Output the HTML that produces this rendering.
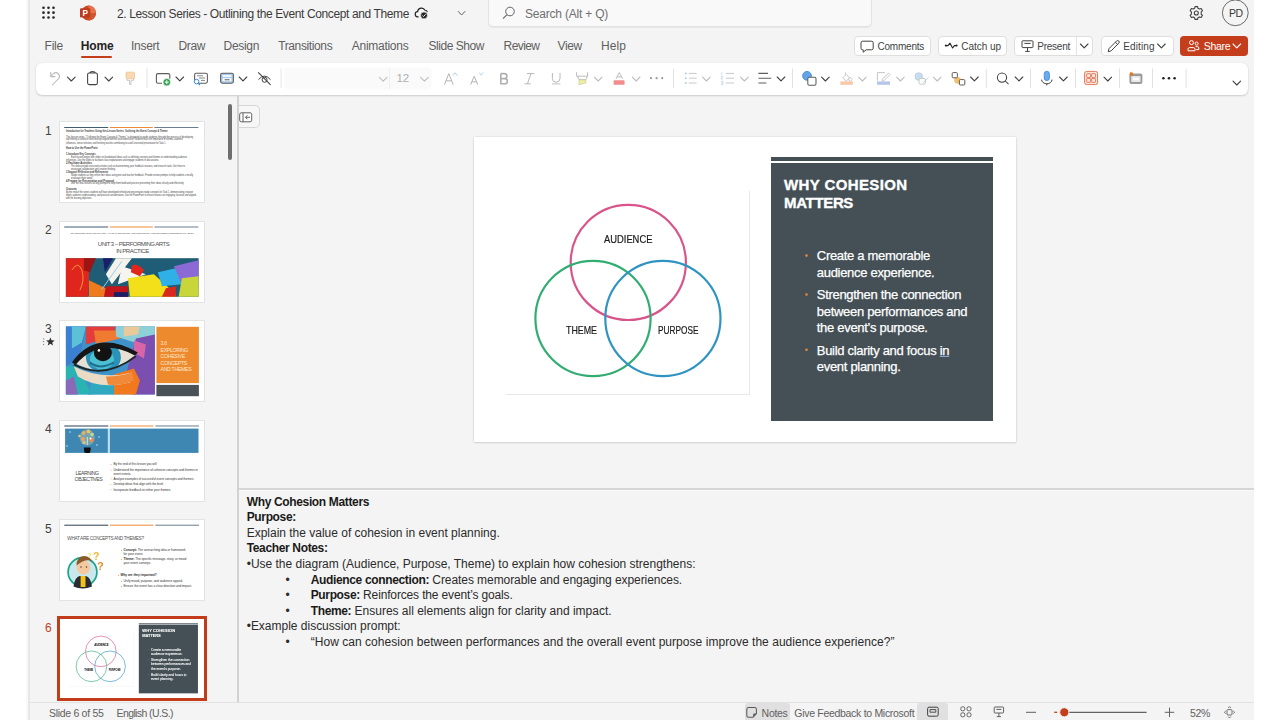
<!DOCTYPE html>
<html><head><meta charset="utf-8">
<style>
*{box-sizing:border-box}
html,body{margin:0;padding:0}
body{width:1280px;height:720px;position:relative;overflow:hidden;background:#fff;font-family:"Liberation Sans",sans-serif;color:#242424}
.a{position:absolute}
.vl{-webkit-text-stroke:0.2px #1a1a1a}
.t{position:absolute;white-space:nowrap;line-height:1}
svg{position:absolute;overflow:visible}
#app{left:26px;top:0;width:1228px;height:720px;background:#f4f4f4;border-left:2px solid #f9f9f9}
#app:before{content:"";position:absolute;left:0;top:0;width:2px;height:720px;background:#e7e7e7}
.tab{position:absolute;top:40px;font-size:12px;color:#5f5f5f;white-space:nowrap;line-height:12px}
.btn{position:absolute;top:36px;height:20px;background:#fff;border:1px solid #dedede;border-radius:4px}
.bt{position:absolute;top:42px;font-size:10px;line-height:10px;color:#424242;white-space:nowrap}
.sep{position:absolute;width:1px;background:#e0e0e0}
.num{position:absolute;left:44.9px;font-size:12px;line-height:12px;color:#424242}
.thumb{position:absolute;left:59.4px;width:145.3px;height:82px;background:#fff;border:1px solid #e3e3e3;overflow:hidden}
.th6 circle{stroke-width:3px;opacity:0.8}
.th6 .vl{font-weight:bold!important;font-size:12px!important;letter-spacing:-0.3px!important;margin-top:1px}
</style></head>
<body>
<div id="app" class="a"></div>

<!-- ===== TITLE BAR ===== -->
<svg style="left:0;top:0" width="1280" height="30">
  <g fill="#242424">
    <circle cx="43.5" cy="7.8" r="1.3"/><circle cx="48.5" cy="7.8" r="1.3"/><circle cx="53.5" cy="7.8" r="1.3"/>
    <circle cx="43.5" cy="12.65" r="1.3"/><circle cx="48.5" cy="12.65" r="1.3"/><circle cx="53.5" cy="12.65" r="1.3"/>
    <circle cx="43.5" cy="17.5" r="1.3"/><circle cx="48.5" cy="17.5" r="1.3"/><circle cx="53.5" cy="17.5" r="1.3"/>
  </g>
  <!-- ppt logo -->
  <circle cx="88.6" cy="13" r="7.4" fill="#c9482a"/>
  <path d="M88.6 5.6 A7.4 7.4 0 0 1 96 13 L88.6 13Z" fill="#e8704a"/>
  <path d="M88.6 13 L96 13 A7.4 7.4 0 0 1 88.6 20.4Z" fill="#d05430"/>
  <rect x="80" y="8.3" width="10.4" height="9.2" rx="1.2" fill="#bd3c1c"/>
  <text x="82.4" y="16.1" font-family="Liberation Sans" font-weight="bold" font-size="8.2" fill="#fff">P</text>
  <!-- cloud check -->
  <path d="M418.6 16.8 h-0.6 a2.6 2.6 0 0 1 -0.4-5.2 a3.9 3.9 0 0 1 7.4-1.3 a2.6 2.6 0 0 1 2.4 1.8" fill="none" stroke="#242424" stroke-width="1.15"/>
  <circle cx="424" cy="15.4" r="3.4" fill="#242424" stroke="#f3f3f3" stroke-width="0.6"/>
  <path d="M422.3 15.4 l1.2 1.2 l2.2-2.4" fill="none" stroke="#fff" stroke-width="0.9"/>
  <!-- chevron -->
  <path d="M458 11.2 l3.6 3.8 l3.6-3.8" fill="none" stroke="#616161" stroke-width="1"/>
</svg>
<div class="t" style="left:117px;top:8px;font-size:12px;line-height:12px;color:#3b3b3b;letter-spacing:-0.38px">2. Lesson Series - Outlining the Event Concept and Theme</div>

<!-- search -->
<div class="a" style="left:487.8px;top:-5px;width:384px;height:31.6px;background:#f9f9f9;border:1px solid #e3e3e3;border-radius:5px;box-shadow:0 1px 1px rgba(0,0,0,0.06)"></div>
<svg style="left:0;top:0" width="1" height="1">
  <circle cx="510" cy="11.5" r="4.3" fill="none" stroke="#616161" stroke-width="1"/>
  <path d="M507 14.6 L503 18.6" stroke="#616161" stroke-width="1.1"/>
</svg>
<div class="t" style="left:525px;top:8px;font-size:12px;line-height:12px;color:#707070;letter-spacing:-0.2px">Search (Alt + Q)</div>

<!-- gear and avatar -->
<svg style="left:0;top:0" width="1" height="1">
  <g transform="translate(1196.3,13)" fill="none" stroke="#424242" stroke-width="1.1">
    <path d="M-1.3 -6.4 L1.3 -6.4 L1.7 -4.7 L3.2 -3.9 L4.9 -4.5 L6.2 -2.3 L4.9 -1.1 L4.9 1.1 L6.2 2.3 L4.9 4.5 L3.2 3.9 L1.7 4.7 L1.3 6.4 L-1.3 6.4 L-1.7 4.7 L-3.2 3.9 L-4.9 4.5 L-6.2 2.3 L-4.9 1.1 L-4.9 -1.1 L-6.2 -2.3 L-4.9 -4.5 L-3.2 -3.9 L-1.7 -4.7 Z" stroke-linejoin="round"/>
    <circle r="2"/>
  </g>
  <circle cx="1235.3" cy="12.8" r="12.9" fill="#f4f4f4" stroke="#6a6a6a" stroke-width="1"/>
</svg>
<div class="t" style="left:1229px;top:8.4px;font-size:10.5px;line-height:10.5px;color:#3a3a3a;letter-spacing:-0.4px">PD</div>

<!-- ===== TABS ===== -->
<div class="tab" style="left:44.5px;letter-spacing:-0.2px">File</div>
<div class="tab" style="left:80.8px;color:#242424;font-weight:bold;letter-spacing:-0.15px">Home</div>
<div class="a" style="left:81px;top:55.5px;width:31px;height:2px;background:#c43e1c;border-radius:1px"></div>
<div class="tab" style="left:131px;letter-spacing:-0.28px">Insert</div>
<div class="tab" style="left:178.5px;letter-spacing:-0.33px">Draw</div>
<div class="tab" style="left:223.6px;letter-spacing:-0.32px">Design</div>
<div class="tab" style="left:278.2px;letter-spacing:-0.38px">Transitions</div>
<div class="tab" style="left:351.8px;letter-spacing:-0.28px">Animations</div>
<div class="tab" style="left:428.6px;letter-spacing:-0.48px">Slide Show</div>
<div class="tab" style="left:503.6px;letter-spacing:-0.6px">Review</div>
<div class="tab" style="left:557.6px;letter-spacing:-0.4px">View</div>
<div class="tab" style="left:601px;letter-spacing:0.1px">Help</div>


<!-- ===== RIBBON CARD ===== -->
<div class="a" style="left:36px;top:63px;width:1212px;height:32px;background:#fff;border-radius:6px;box-shadow:0 1px 2px rgba(0,0,0,0.16),0 0 1px rgba(0,0,0,0.10)"></div>
<svg style="left:0;top:0" width="1" height="1">
 <defs>
  <path id="chev" d="M0 0 l3.8 3.8 l3.8-3.8" fill="none" stroke-width="1.1" stroke-linecap="round" stroke-linejoin="round"/>
 </defs>
 <!-- undo disabled -->
 <path d="M52.3 85 L58.6 78.6 A3.6 3.6 0 0 0 53.6 73.5 L51 76.2 M50.8 72.3 L50.8 76.6 L55 76.6" fill="none" stroke="#b9b9b9" stroke-width="1.05" stroke-linecap="round" stroke-linejoin="round"/>
 <use href="#chev" x="67.5" y="77.2" stroke="#424242"/>
 <!-- clipboard -->
 <rect x="87.6" y="73" width="9.8" height="11.6" rx="1.6" fill="none" stroke="#424242" stroke-width="1.05"/>
 <path d="M90 73 a2.4 1.3 0 0 1 5 0" fill="none" stroke="#424242" stroke-width="1.05"/>
 <use href="#chev" x="105" y="77.2" stroke="#424242"/>
 <!-- format painter -->
 <rect x="126" y="72.2" width="8.6" height="6.6" rx="1" fill="#f9d9b4" stroke="#f2c28e" stroke-width="0.8"/>
 <path d="M127 78.8 v1.5 h2.6 v4.2 h1.4 v-4.2 h2.6 v-1.5" fill="none" stroke="#c2c2c2" stroke-width="0.9"/>
 <!-- separator -->
 <rect x="146.5" y="68.2" width="1" height="19.7" fill="#e1e1e1"/>
 <!-- new slide -->
 <path d="M162 83.3 h-4 a1.6 1.6 0 0 1 -1.6-1.6 v-6.5 a1.6 1.6 0 0 1 1.6-1.6 h10.2 a1.6 1.6 0 0 1 1.6 1.6 v3.5" fill="none" stroke="#5c5c5c" stroke-width="1.1"/>
 <circle cx="166.8" cy="82.2" r="3.7" fill="#2e9e4a" stroke="#fff" stroke-width="0.6"/>
 <path d="M166.8 80.2 v4 M164.8 82.2 h4" stroke="#fff" stroke-width="1"/>
 <use href="#chev" x="176" y="77" stroke="#424242"/>
 <!-- reuse slides -->
 <rect x="194.6" y="73.2" width="12.8" height="10" rx="1.6" fill="none" stroke="#5c5c5c" stroke-width="1.05"/>
 <path d="M197 75.8 h6 M199 78 h6 M201 80.4 h4" stroke="#7a7a7a" stroke-width="0.9"/>
 <circle cx="196.6" cy="81.6" r="2.3" fill="#fff" stroke="#3d8fd8" stroke-width="1"/>
 <path d="M198.2 83.3 l1.8 1.8" stroke="#3d8fd8" stroke-width="1.1"/>
 <!-- layout -->
 <rect x="220.6" y="73.2" width="12.8" height="10" rx="1.6" fill="#a9cbea" stroke="#5c5c5c" stroke-width="1.05"/>
 <rect x="222.6" y="75.2" width="8.8" height="1.6" fill="#fff"/>
 <rect x="222.6" y="78.2" width="8.8" height="3" fill="#fff"/>
 <rect x="224.6" y="79" width="5" height="1.4" fill="#8a8a8a"/>
 <use href="#chev" x="239.2" y="77" stroke="#424242"/>
 <!-- hide slide -->
 <path d="M258.5 79.6 q5.8-7 12 0" fill="none" stroke="#424242" stroke-width="1"/>
 <circle cx="264.6" cy="79.8" r="2.5" fill="none" stroke="#424242" stroke-width="1"/>
 <path d="M258.2 72.4 l12.4 12.4" stroke="#424242" stroke-width="1.05"/>
 <rect x="280.6" y="68.2" width="1" height="19.7" fill="#e6e6e6"/>
 <!-- font boxes -->
 <rect x="284.5" y="67.6" width="147" height="22" rx="4" fill="#fafafa"/>
 <rect x="389" y="67.6" width="1" height="22" fill="#f0f0f0"/>
 <use href="#chev" x="379.4" y="77.3" stroke="#bdbdbd"/>
 <use href="#chev" x="420.6" y="77.3" stroke="#bdbdbd"/>
 <!-- grow/shrink -->
 <path d="M444.4 84.8 L448.8 73.6 L453.2 84.8 M446 80.8 h5.6" fill="none" stroke="#b5b5b5" stroke-width="1"/>
 <path d="M452.8 75.6 l2.3-2.8 l2.3 2.8" fill="none" stroke="#a9cfe6" stroke-width="0.9"/>
 <path d="M470.6 84.8 L474.2 76.2 L477.8 84.8 M471.9 81.8 h4.6" fill="none" stroke="#b5b5b5" stroke-width="1"/>
 <path d="M479.2 72.6 l2 2.6 l2-2.6" fill="none" stroke="#a9cfe6" stroke-width="0.9"/>
 <!-- B I U -->
 <path d="M500.8 73.6 h3.6 a2.5 2.5 0 0 1 0 5 h-3.6 M500.8 78.6 h4 a2.6 2.6 0 0 1 0 5.2 h-4 Z M500.8 73.6 v10.2" fill="none" stroke="#b0b0b0" stroke-width="1.6"/>
 <path d="M527 73.6 h7.4 M524.4 83.8 h6.4 M531 73.6 l-3.6 10.2" fill="none" stroke="#b8b8b8" stroke-width="1"/>
 <path d="M552.4 73.1 v5.4 a3.8 3.8 0 0 0 7.6 0 v-5.4" fill="none" stroke="#b8b8b8" stroke-width="1"/>
 <rect x="552" y="83.4" width="8.4" height="1" fill="#c0c0c0"/>
 <!-- highlighter -->
 <path d="M576.6 72.2 v4 h11 v-4" fill="none" stroke="#b5b5b5" stroke-width="0.9"/>
 <path d="M577.6 76.4 l1.4 3.2 h7 l1.4-3.2" fill="none" stroke="#b5b5b5" stroke-width="0.9"/>
 <path d="M579 79.8 v5 l6.8-2 v-3z" fill="#eef0a0" stroke="#c7c7a5" stroke-width="0.7"/>
 <use href="#chev" x="594.4" y="77.2" stroke="#bdbdbd"/>
 <!-- font color -->
 <path d="M616 78.8 L619.3 72.6 L622.6 78.8 M617.1 76.9 h4.4" fill="none" stroke="#b5b5b5" stroke-width="0.9"/>
 <rect x="613.6" y="80.3" width="11" height="4.5" rx="0.8" fill="#f28d8d"/>
 <use href="#chev" x="632.4" y="77.2" stroke="#bdbdbd"/>
 <!-- more -->
 <g fill="#9a9a9a"><circle cx="651" cy="78.2" r="1.1"/><circle cx="656.6" cy="78.2" r="1.1"/><circle cx="662.2" cy="78.2" r="1.1"/></g>
 <rect x="673" y="68.6" width="1" height="19.3" fill="#e1e1e1"/>
 <!-- bullets -->
 <g fill="#a7c8e2"><circle cx="685.8" cy="73.4" r="0.9"/><circle cx="685.8" cy="78.2" r="0.9"/><circle cx="685.8" cy="83" r="0.9"/></g>
 <path d="M688.8 73.4 h7.8 M688.8 78.2 h7.8 M688.8 83 h7.8" stroke="#c2c2c2" stroke-width="0.9"/>
 <use href="#chev" x="702.6" y="77.2" stroke="#bdbdbd"/>
 <path d="M721.8 72.4 v2.4 M721.2 76.6 h1.6 l-1.6 2.4 h1.6 M721.2 81.2 h1.6 v3.4 h-1.6 M721.4 83 h1.2" fill="none" stroke="#a7c8e2" stroke-width="0.7"/>
 <path d="M725.8 73.4 h8.2 M725.8 78.2 h8.2 M725.8 83 h8.2" stroke="#c2c2c2" stroke-width="0.9"/>
 <use href="#chev" x="740.6" y="77.2" stroke="#bdbdbd"/>
 <path d="M758.4 73.4 h9.6 M758.4 78.2 h12.8 M758.4 83 h8" stroke="#5f5f5f" stroke-width="1.1"/>
 <use href="#chev" x="777.2" y="77" stroke="#424242"/>
 <rect x="792" y="68.6" width="1" height="19.3" fill="#e1e1e1"/>
 <!-- shapes -->
 <circle cx="807" cy="75.8" r="4.4" fill="#63a4e6" stroke="#3b84d0" stroke-width="0.8"/>
 <rect x="807.8" y="77.2" width="8.2" height="8" rx="1.5" fill="#fff" stroke="#5c5c5c" stroke-width="1.05"/>
 <use href="#chev" x="821.6" y="77.2" stroke="#424242"/>
 <!-- fill -->
 <path d="M845.6 72.3 v2 M843 77.6 l3.2-3.2 l3.4 3.4 l-3.4 3.4z" fill="none" stroke="#c0c0c0" stroke-width="0.9"/>
 <circle cx="850.3" cy="79.4" r="1.7" fill="none" stroke="#c0c0c0" stroke-width="0.8"/>
 <rect x="840.4" y="81.4" width="12.5" height="3.4" fill="#f8c8a8"/>
 <use href="#chev" x="858.6" y="77.2" stroke="#bdbdbd"/>
 <!-- outline -->
 <path d="M885 72.6 h-7.6 v8.2" fill="none" stroke="#c0c0c0" stroke-width="0.9"/>
 <path d="M888.6 73.2 l1.4 1.4 l-6.2 6.2 h-1.6 v-1.6z" fill="none" stroke="#c0c0c0" stroke-width="0.9"/>
 <rect x="877" y="81.4" width="13" height="3.4" fill="#b5c6ea"/>
 <use href="#chev" x="896.6" y="77.2" stroke="#bdbdbd"/>
 <!-- effects -->
 <circle cx="918.8" cy="76.6" r="3.8" fill="#c9dcef" stroke="#b3cde6" stroke-width="0.8"/>
 <rect x="919" y="78.4" width="6.4" height="5.8" rx="1.5" fill="#fff" stroke="#c2c2c2" stroke-width="0.9"/>
 <path d="M923.6 82.6 l2.2-2.6 l2.6-2.6" stroke="#a9cfe6" stroke-width="0.9" fill="none"/>
 <use href="#chev" x="933.4" y="77.2" stroke="#bdbdbd"/>
 <!-- arrange -->
 <circle cx="957.6" cy="80.3" r="3.4" fill="#f2c26a"/>
 <rect x="952.2" y="72.6" width="5.2" height="5.2" rx="1" fill="#fff" stroke="#5c5c5c" stroke-width="1"/>
 <rect x="959.4" y="79.6" width="5.4" height="5.4" rx="1" fill="#fff" stroke="#5c5c5c" stroke-width="1"/>
 <use href="#chev" x="970.6" y="77" stroke="#424242"/>
 <rect x="985.8" y="68.6" width="1" height="19.3" fill="#e1e1e1"/>
 <!-- find -->
 <circle cx="1002" cy="77.6" r="4.6" fill="none" stroke="#424242" stroke-width="1.05"/>
 <path d="M1005.3 81 l3.2 3.2" stroke="#424242" stroke-width="1.05"/>
 <use href="#chev" x="1015.2" y="77" stroke="#424242"/>
 <rect x="1030" y="68.6" width="1" height="19.3" fill="#e1e1e1"/>
 <!-- dictate -->
 <rect x="1044.2" y="71.2" width="5.2" height="9.4" rx="2.6" fill="#6aaaf0" stroke="#3f86d4" stroke-width="0.8"/>
 <path d="M1041.6 79.6 a5.2 4.2 0 0 0 10.4 0 M1046.8 83.8 v1.6" fill="none" stroke="#424242" stroke-width="1"/>
 <use href="#chev" x="1059.6" y="77" stroke="#424242"/>
 <rect x="1075" y="68.6" width="1" height="19.3" fill="#e1e1e1"/>
 <!-- designer -->
 <rect x="1084.6" y="71.4" width="13" height="13.2" rx="2" fill="#fde3d8" stroke="#da6d4c" stroke-width="0.9"/>
 <g fill="none" stroke="#da6d4c" stroke-width="0.8">
  <rect x="1086.7" y="73.6" width="3.9" height="3.9" rx="0.6"/><rect x="1091.6" y="73.6" width="3.9" height="3.9" rx="0.6"/>
  <rect x="1086.7" y="78.5" width="3.9" height="3.9" rx="0.6"/><rect x="1091.6" y="78.5" width="3.9" height="3.9" rx="0.6"/>
 </g>
 <use href="#chev" x="1104" y="77.2" stroke="#424242"/>
 <rect x="1119" y="68.6" width="1" height="19.3" fill="#e1e1e1"/>
 <!-- add-ins -->
 <rect x="1129.4" y="73.4" width="13" height="10.6" rx="2" fill="#9b9b9b"/>
 <rect x="1131.2" y="76" width="9.4" height="6" rx="0.8" fill="#e6e6e6"/>
 <rect x="1133" y="77.6" width="6" height="2.6" fill="#fff"/>
 <path d="M1129.6 75.4 q-0.6-2.6 1.6-4 q0.2 1.4 1.6 1.2 q1 1.6 -0.4 3.2z" fill="#e8761a"/>
 <rect x="1152" y="68.6" width="1" height="19.3" fill="#e1e1e1"/>
 <g fill="#242424"><circle cx="1163.4" cy="78.2" r="1.3"/><circle cx="1169" cy="78.2" r="1.3"/><circle cx="1174.6" cy="78.2" r="1.3"/></g>
 <rect x="1185.6" y="68.6" width="1" height="19.3" fill="#e1e1e1"/>
 <use href="#chev" x="1233" y="81.2" stroke="#424242"/>
</svg>
<div class="t" style="left:396.6px;top:73.4px;font-size:11.5px;line-height:11.5px;color:#b0b0b0;letter-spacing:-0.3px">12</div>


<!-- ===== RIGHT BUTTONS ===== -->
<div class="btn" style="left:854px;width:77px"></div>
<div class="btn" style="left:938px;width:69px"></div>
<div class="btn" style="left:1014px;width:79px"></div>
<div class="a" style="left:1076px;top:37px;width:1px;height:18px;background:#e3e3e3"></div>
<div class="btn" style="left:1100.5px;width:73px"></div>
<div class="a" style="left:1180px;top:36px;width:68px;height:19.5px;background:#c43e1c;border-radius:4px"></div>
<div class="bt" style="left:877.4px;letter-spacing:-0.2px">Comments</div>
<div class="bt" style="left:961.3px;letter-spacing:-0.05px">Catch up</div>
<div class="bt" style="left:1037.3px;letter-spacing:-0.25px">Present</div>
<div class="bt" style="left:1123.2px;letter-spacing:0.12px">Editing</div>
<div class="bt" style="left:1203.8px;top:40.6px;font-size:10.6px;line-height:10.6px;color:#fff;letter-spacing:-0.35px">Share</div>
<svg style="left:0;top:0" width="1" height="1">
 <!-- comments icon -->
 <path d="M862.6 41.2 h9 a1.6 1.6 0 0 1 1.6 1.6 v5.4 a1.6 1.6 0 0 1 -1.6 1.6 h-5.4 l-3 2.4 v-2.4 h-0.6 a1.6 1.6 0 0 1 -1.6-1.6 v-5.4 a1.6 1.6 0 0 1 1.6-1.6z" fill="none" stroke="#424242" stroke-width="1"/>
 <!-- catch up -->
 <path d="M945.4 45.6 h2.6 l2-2.4 l2.6 4.8 l1.8-2.4 h2.4" fill="none" stroke="#242424" stroke-width="1.1" stroke-linejoin="round"/>
 <circle cx="945.8" cy="45.6" r="1" fill="#242424"/><circle cx="956.6" cy="45.6" r="1" fill="#242424"/>
 <!-- present -->
 <rect x="1022" y="40.8" width="11" height="6.8" rx="0.8" fill="none" stroke="#424242" stroke-width="1"/>
 <path d="M1024.4 43.4 h6.2 M1027.5 47.6 v3.6 M1025.2 51.4 h4.6" fill="none" stroke="#424242" stroke-width="1"/>
 <use href="#chev" x="1080.4" y="44" stroke="#424242"/>
 <!-- pencil -->
 <path d="M1108.2 51.8 l0.8-3.2 l7.6-7.6 a1.5 1.5 0 0 1 2.2 2.2 l-7.6 7.6z M1115.4 42.2 l2.2 2.2" fill="none" stroke="#424242" stroke-width="1"/>
 <use href="#chev" x="1157.6" y="44" stroke="#424242"/>
 <!-- share icon -->
 <circle cx="1191.5" cy="42.6" r="2" fill="none" stroke="#fff" stroke-width="1"/>
 <circle cx="1196.6" cy="43.6" r="1.5" fill="none" stroke="#fff" stroke-width="1"/>
 <path d="M1188 50.8 v-1.6 a1.6 1.6 0 0 1 1.6-1.6 h3.8 a1.6 1.6 0 0 1 1.6 1.6 v1.6 z M1195.6 46.6 h1.8 a1.4 1.4 0 0 1 1.4 1.4 v1.6 h-2.6" fill="none" stroke="#fff" stroke-width="1"/>
 <use href="#chev" x="1233" y="44" stroke="#fff"/>
</svg>

<!-- ===== PANES ===== -->
<div class="a" style="left:237.4px;top:96px;width:1.4px;height:606px;background:#d2d2d2"></div>
<div class="a" style="left:227.5px;top:104.3px;width:4.6px;height:56px;background:#6e6e6e;border-radius:2.3px"></div>
<div class="a" style="left:238.5px;top:104.9px;width:21.2px;height:23.6px;background:#f7f7f7;border:1px solid #d6d6d6;border-left:none;border-radius:0 5px 5px 0"></div>
<svg style="left:0;top:0" width="1" height="1">
 <rect x="239.7" y="112.8" width="12" height="9" rx="1.6" fill="#fff" stroke="#5a5a5a" stroke-width="0.95"/>
 <path d="M243 112.8 v9 M250 117.3 h-4.6 M247.4 115.4 l-1.9 1.9 l1.9 1.9" fill="none" stroke="#5a5a5a" stroke-width="0.95"/>
</svg>
<!-- notes divider -->
<div class="a" style="left:238.8px;top:488px;width:1015px;height:1.6px;background:#d6d6d6"></div>
<div class="a" style="left:238.8px;top:489.6px;width:1015px;height:1px;background:#f9f9f9"></div>
<!-- status bar -->
<div class="a" style="left:30px;top:702px;width:1224px;height:1px;background:#e1e1e1"></div>
<div class="a" style="left:745.2px;top:703px;width:44.5px;height:17px;background:#e0e0e0;border-radius:3px 3px 0 0"></div>
<div class="a" style="left:917px;top:703px;width:31.4px;height:17px;background:#e0e0e0;border-radius:3px 3px 0 0"></div>
<div class="t" style="left:49px;top:708px;font-size:10.5px;line-height:10.5px;color:#616161;letter-spacing:-0.3px">Slide 6 of 55</div>
<div class="t" style="left:116.5px;top:708px;font-size:10.5px;line-height:10.5px;color:#616161;letter-spacing:-0.6px">English (U.S.)</div>
<div class="t" style="left:761.6px;top:708px;font-size:10.5px;line-height:10.5px;color:#616161;letter-spacing:-0.3px">Notes</div>
<div class="t" style="left:794.3px;top:708px;font-size:10.5px;line-height:10.5px;color:#616161;letter-spacing:-0.3px">Give Feedback to Microsoft</div>
<div class="t" style="left:1190px;top:708px;font-size:10.5px;line-height:10.5px;color:#616161;letter-spacing:-0.3px">52%</div>
<svg style="left:0;top:0" width="1" height="1">
 <path d="M746.8 709.2 a1.8 1.8 0 0 1 1.8-1.8 h6 a1.8 1.8 0 0 1 1.8 1.8 v4.6 l-3.4 3.4 h-4.4 a1.8 1.8 0 0 1 -1.8-1.8z" fill="none" stroke="#5a5a5a" stroke-width="1.05"/><path d="M756.4 713.6 h-2.2 a1 1 0 0 0 -1 1 v2.4z" fill="#5a5a5a"/>
 <rect x="927.6" y="707.2" width="10.6" height="9" rx="1.4" fill="none" stroke="#424242" stroke-width="1"/>
 <path d="M930 709.6 h5.8 v2.6 h-5.8z" fill="none" stroke="#424242" stroke-width="0.9"/>
 <g fill="none" stroke="#616161" stroke-width="1">
  <rect x="960.8" y="706.8" width="4" height="4" rx="1.6"/><rect x="967" y="706.8" width="4" height="4" rx="1.6"/>
  <rect x="960.8" y="712.8" width="4" height="4" rx="1.6"/><rect x="967" y="712.8" width="4" height="4" rx="1.6"/>
 </g>
 <rect x="994.2" y="707" width="9.4" height="6" rx="0.8" fill="none" stroke="#616161" stroke-width="1"/>
 <path d="M996.4 709.4 h5 M998.9 713 v3.4 M996.8 716.6 h4.2" fill="none" stroke="#616161" stroke-width="1"/>
 <path d="M1026 712.3 h10" stroke="#616161" stroke-width="1"/>
 <path d="M1054.2 712.3 h3" stroke="#c43e1c" stroke-width="1.3"/>
 <path d="M1066 712.3 h80.6" stroke="#616161" stroke-width="1.3"/>
 <circle cx="1064.3" cy="712.3" r="4.6" fill="#c43e1c" stroke="#f4f4f4" stroke-width="1"/>
 <path d="M1164.8 712.3 h9.4 M1169.5 707.6 v9.4" stroke="#616161" stroke-width="1"/>
 <g fill="none" stroke="#616161" stroke-width="0.9">
  <rect x="1227" y="709.6" width="5" height="5.4" rx="1"/>
  <path d="M1228.2 708 l1.3-1.4 l1.3 1.4 M1228.2 716.6 l1.3 1.4 l1.3-1.4 M1225.8 711 l-1.4 1.3 l1.4 1.3 M1233.2 711 l1.4 1.3 l-1.4 1.3"/>
 </g>
</svg>


<!-- ===== MAIN SLIDE ===== -->
<div class="a" style="left:474px;top:136.6px;width:542.2px;height:305.2px;background:#fff;box-shadow:0 0 2px rgba(0,0,0,0.14),0 1px 2px rgba(0,0,0,0.10)"><div class="a" style="left:1px;top:0.9px;width:0;height:0">
<div class="a" style="left:295.7px;top:19.5px;width:222.3px;height:4.4px;background:#445056"></div>
<div class="a" style="left:295.7px;top:25.6px;width:222.3px;height:257.5px;background:#445056"></div>
<div class="a" style="left:30.8px;top:256.8px;width:243.5px;height:1px;background:#e8e8e8"></div>
<div class="a" style="left:273.6px;top:54px;width:1px;height:203.5px;background:#e8e8e8"></div>
<svg style="left:0;top:0" width="1" height="1">
 <circle cx="153.3" cy="125.4" r="57.6" fill="none" stroke="#d9548a" stroke-width="2.2"/>
 <circle cx="118" cy="181.5" r="57.6" fill="none" stroke="#32ad72" stroke-width="2.2"/>
 <circle cx="187.9" cy="181.5" r="57.6" fill="none" stroke="#2f94c2" stroke-width="2.2"/>
</svg>
<div class="t vl" style="left:129px;top:96.1px;font-size:10.5px;color:#1a1a1a;transform:scaleX(0.892);transform-origin:0 0">AUDIENCE</div>
<div class="t vl" style="left:91px;top:187.2px;font-size:10.5px;color:#1a1a1a;transform:scaleX(0.844);transform-origin:0 0">THEME</div>
<div class="t vl" style="left:182.6px;top:187.2px;font-size:10.5px;color:#1a1a1a;transform:scaleX(0.789);transform-origin:0 0">PURPOSE</div>
<div class="t" style="left:309.1px;top:38.3px;font-size:15px;line-height:18.4px;color:#fff;font-weight:bold;letter-spacing:0.37px;white-space:normal;width:200px;-webkit-text-stroke:0.35px #fff">WHY COHESION<br><span style="letter-spacing:-0.35px">MATTERS</span></div>
<svg style="left:0;top:0" width="1" height="1"><g fill="#e8873a">
 <circle cx="331.5" cy="118.6" r="1.3"/><circle cx="331.5" cy="157.5" r="1.3"/><circle cx="331.5" cy="212.7" r="1.3"/>
</g></svg>
<div class="t" style="left:341.8px;top:111px;font-size:13px;line-height:16.2px;color:#fff;letter-spacing:-0.3px;-webkit-text-stroke:0.25px #fff">Create a memorable<br>audience experience.</div>
<div class="t" style="left:341.8px;top:149.9px;font-size:13px;line-height:16.4px;color:#fff;letter-spacing:-0.3px;-webkit-text-stroke:0.25px #fff">Strengthen the connection<br>between performances and<br>the event’s purpose.</div>
<div class="t" style="left:341.8px;top:205.1px;font-size:13px;line-height:16.6px;color:#fff;letter-spacing:-0.3px;-webkit-text-stroke:0.25px #fff">Build clarity and focus <span style="text-decoration:underline;text-decoration-color:#8aa4d8">in</span><br>event planning.</div>

</div></div>

<!-- ===== THUMBNAILS ===== -->
<div class="num" style="top:124.6px">1</div>
<div class="num" style="top:224.1px">2</div>
<div class="num" style="top:323.4px">3</div>
<div class="num" style="top:423.1px">4</div>
<div class="num" style="top:522.9px">5</div>
<div class="num" style="top:622.2px;color:#c43e1c">6</div>
<svg style="left:0;top:0" width="1" height="1">
 <path d="M50.4 337.4 l1.15 2.9 l3.1 0.2 l-2.4 2 l0.8 3 l-2.65-1.7 l-2.65 1.7 l0.8-3 l-2.4-2 l3.1-0.2z" fill="#303030"/>
 <path d="M43 338.6 l1.2 0.6 M42.8 341.6 h1.4 M43 344.8 l1.2-0.6" stroke="#707070" stroke-width="0.9"/>
</svg>

<!-- thumb 1 -->
<div class="thumb" style="top:121px">
 <svg style="left:0;top:0" width="145" height="82">
  <rect x="4.2" y="5" width="44" height="1" fill="#3f5d74"/>
  <rect x="49.8" y="5" width="43" height="1" fill="#ee8c36"/>
  <rect x="94.4" y="5" width="44" height="1" fill="#6c7e8e"/>
  <g font-family="Liberation Sans" font-size="2.6" fill="#3a3a3a">
   <text x="6" y="10.2" textLength="101.5" lengthAdjust="spacingAndGlyphs" font-weight="bold">Introduction for Teachers Using this Lesson Series: Outlining the Event Concept &amp; Theme</text>
   <text x="6" y="15.8" textLength="127.0" lengthAdjust="spacingAndGlyphs">This lesson series, &quot;Outlining the Event Concept &amp; Theme,&quot; is designed to guide students through the process of developing</text>
   <text x="6" y="18.4" textLength="117.0" lengthAdjust="spacingAndGlyphs">and refining a cohesive event concept aligned with the assessment brief. Students learn the importance of themes, audience</text>
   <text x="6" y="21.6" textLength="100.0" lengthAdjust="spacingAndGlyphs">influences, venue selection, and finishing touches contributing to a well-structured presentation for Task 1.</text>
   <text x="6" y="27.2" textLength="31.6" lengthAdjust="spacingAndGlyphs" font-weight="bold">How to Use the PowerPoint</text>
   <text x="6" y="33.4" textLength="29.5" lengthAdjust="spacingAndGlyphs" font-weight="bold">1.Introduce Key Concepts</text>
   <text x="11" y="36.4" textLength="116.0" lengthAdjust="spacingAndGlyphs">Each lesson begins with slides on foundational ideas such as defining concepts and themes or understanding audience</text>
   <text x="6" y="39.4" textLength="93.0" lengthAdjust="spacingAndGlyphs">influences. Use the slides to facilitate class explanations and engage students in discussions.</text>
   <text x="6" y="42.1" textLength="26.0" lengthAdjust="spacingAndGlyphs" font-weight="bold">2.Facilitate Activities</text>
   <text x="11" y="44.9" textLength="114.0" lengthAdjust="spacingAndGlyphs">The slides provide structured activities such as brainstorming, peer feedback sessions, and research tasks. Use these to</text>
   <text x="11" y="48.1" textLength="44.5" lengthAdjust="spacingAndGlyphs">encourage collaboration and creative thinking.</text>
   <text x="6" y="50.8" textLength="42.0" lengthAdjust="spacingAndGlyphs" font-weight="bold">3.Support Reflection and Refinement</text>
   <text x="11" y="53.7" textLength="122.0" lengthAdjust="spacingAndGlyphs">Guide students as they refine their ideas using peer and teacher feedback. Provide review prompts to help students critically</text>
   <text x="11" y="56.8" textLength="22.0" lengthAdjust="spacingAndGlyphs">evaluate their work.</text>
   <text x="6" y="59.7" textLength="48.0" lengthAdjust="spacingAndGlyphs" font-weight="bold">4.Prepare for Presentation and Proposal</text>
   <text x="11" y="62.4" textLength="113.0" lengthAdjust="spacingAndGlyphs">Use the final lessons as key prompts to help them build and practice presenting their ideas clearly and effectively.</text>
   <text x="6" y="68.4" textLength="10.7" lengthAdjust="spacingAndGlyphs" font-weight="bold">Outcome</text>
   <text x="6" y="71.0" textLength="127.0" lengthAdjust="spacingAndGlyphs">By the end of the series students will have developed refined and presentation-ready concepts for Task 1, demonstrating creative</text>
   <text x="6" y="74.0" textLength="130.0" lengthAdjust="spacingAndGlyphs">depth, audience understanding, and practical considerations. Use the PowerPoint to ensure lessons are engaging, focused, and aligned</text>
   <text x="6" y="77.1" textLength="26.0" lengthAdjust="spacingAndGlyphs">with the learning objectives.</text>
  </g>
 </svg>
</div>

<!-- thumb 2 -->
<div class="thumb" style="top:220.5px">
 <svg style="left:0;top:0" width="145" height="82">
  <rect x="4.2" y="4.5" width="44" height="1" fill="#3f5d74"/>
  <rect x="49.8" y="4.5" width="43" height="1" fill="#ee8c36"/>
  <rect x="94.4" y="4.5" width="44" height="1" fill="#6c7e8e"/>
  <text x="10.5" y="11.8" textLength="123.5" lengthAdjust="spacingAndGlyphs" font-family="Liberation Sans" font-size="2.4" fill="#444">PEARSON BTEC LEVEL 1/LEVEL 2 TECH AWARD IN PERFORMING ARTS (PERFORMING ARTS COMPONENT 3 RESPONDING TO A BRIEF)</text>
  <g font-family="Liberation Sans" font-size="6" fill="#505050" style="letter-spacing:-0.5px">
   <text x="37.8" y="24.4">UNIT 3 – PERFORMING ARTS</text>
   <text x="56.2" y="30.6">IN PRACTICE</text>
  </g>
  <g transform="translate(5.9,36.2)" style="filter:blur(0.35px)">
   <rect width="132.7" height="38.6" fill="#1f5d76"/>
   <path d="M0 0 h24 l-2 38.6 h-22z" fill="#e0261c"/>
   <path d="M18 0 h12 l-6 14 l-6 -2z" fill="#9c1414"/>
   <path d="M37 0 h10 l-8 14z" fill="#1a1f6a"/>
   <path d="M23 22 l17 8 v8.6 h-17z" fill="#f07a1e"/>
   <path d="M50 0 h16 l-20 26 l-6 -10z" fill="#f4f2ea"/>
   <path d="M56 8 l24 8 l-28 10z" fill="#f6f4ee"/>
   <path d="M66 7 q6 -2 12 5 l-4 6 l-9 -4z" fill="#e2261c"/>
   <path d="M62 20 l26 -4 l22 20 v2.6 h-46z" fill="#f3df1a"/>
   <path d="M92 14 l18 -4 l6 16 l-20 2z" fill="#2fb0e6"/>
   <path d="M108 8 l24.7 -6 v24 l-14 6z" fill="#8c6ad6"/>
   <path d="M116 20 l16.7 -2 v20.6 h-20z" fill="#c9d63a"/>
   <path d="M40 28 h22 v10.6 h-24z" fill="#c0161c"/>
   <path d="M48 34 h14 v4.6 h-14z" fill="#1a1f6a"/>
   <path d="M100 30 l10 -2 v10.6 h-14z" fill="#d9281c"/>
   <path d="M36 31 l20 -28" stroke="#8fd0f0" stroke-width="1" fill="none"/>
   <path d="M6 12 q6 -10 10 0 q3 10 -2 20" stroke="#f6b040" stroke-width="0.8" fill="none"/>
  </g>
 </svg>
</div>

<!-- thumb 3 -->
<div class="thumb" style="top:319.7px">
 <svg style="left:0;top:0" width="145" height="82">
  <g transform="translate(5.9,5.4)" style="filter:blur(0.35px)">
   <rect width="89" height="68" fill="#3f93c8"/>
   <path d="M0 0 h20 l-6 30 l-14 10z" fill="#3a7fd0"/>
   <path d="M6 0 h14 l-4 16 l-10 6z" fill="#5cc0d8"/>
   <path d="M20 0 h30 l-4 10 l-26 8z" fill="#e23c3c"/>
   <path d="M28 4 h22 l4 8 l-24 6z" fill="#f07a30"/>
   <path d="M50 0 h39 v14 l-20 2 l-19 -6z" fill="#8ed0d8"/>
   <path d="M58 0 h16 l-2 8 l-14 2z" fill="#e9c89a"/>
   <path d="M70 12 l19 -4 v60 h-22 l-6 -24z" fill="#7a4fb0"/>
   <path d="M68 14 l12 4 l-2 14 l-10 -6z" fill="#d865a8"/>
   <path d="M0 40 l12 0 l14 28 h-26z" fill="#2bb2b2"/>
   <path d="M0 54 l8 -4 l4 18 h-12z" fill="#8a6ab8"/>
   <path d="M48 48 l20 -6 l6 12 l-4 14 h-22z" fill="#f2781e"/>
   <path d="M26 56 h22 v12 h-26z" fill="#30a8c0"/>
   <path d="M8 40 q28 14 58 6 l-2 10 q-30 8 -52 -6z" fill="#eadbc4"/>
   <path d="M40 50 q14 0 26 -4 l2 8 q-14 6 -26 4z" fill="#f08a3a"/>
   <path d="M8 36 Q36 4 70 28 Q40 54 8 36z" fill="#e6e0d2"/>
   <ellipse cx="37.5" cy="31" rx="17.5" ry="15" fill="#2892b8"/>
   <ellipse cx="36" cy="33" rx="12" ry="10" fill="#4cc0d2"/>
   <path d="M24 36 q10 8 24 0" fill="none" stroke="#1d6f90" stroke-width="2"/>
   <ellipse cx="37" cy="26.5" rx="9" ry="8.3" fill="#121212"/>
   <circle cx="33" cy="24" r="1.3" fill="#f2efe6"/>
   <path d="M6 36 Q30 2 72 26 l-3 3 Q34 10 10 38z" fill="#161616"/>
   <path d="M8 38 Q38 54 70 30" fill="none" stroke="#222" stroke-width="1.8"/>
  </g>
  <rect x="96.4" y="5.8" width="42.5" height="56.3" fill="#ee8a2e"/>
  <rect x="96.4" y="63.9" width="42.5" height="11.3" fill="#4a5258"/>
  <g font-family="Liberation Sans" font-size="5.2" fill="#fde6cc" style="letter-spacing:-0.3px">
   <text x="100.5" y="24.3">3.6</text>
   <text x="100.5" y="30.8">EXPLORING</text>
   <text x="100.5" y="37.3">COHESIVE</text>
   <text x="100.5" y="43.8">CONCEPTS</text>
   <text x="100.5" y="50.3">AND THEMES</text>
  </g>
 </svg>
</div>

<!-- thumb 4 -->
<div class="thumb" style="top:419.5px">
 <svg style="left:0;top:0" width="145" height="82">
  <rect x="4.3" y="4.5" width="44" height="1" fill="#2f4050"/>
  <rect x="50" y="4.5" width="43.5" height="1" fill="#ee8c36"/>
  <rect x="95.4" y="4.5" width="43.6" height="1" fill="#6c7e8e"/>
  <rect x="5.1" y="7.6" width="42.8" height="24.3" fill="#3f87b3"/>
  <rect x="47.9" y="7.6" width="2" height="24.3" fill="#b8e0f2"/>
  <rect x="49.9" y="7.6" width="88.6" height="24.3" fill="#3f87b3"/>
  <g style="filter:blur(0.3px)">
   <ellipse cx="27.2" cy="16.5" rx="7.6" ry="8" fill="#8fb0a8" opacity="0.7"/>
   <circle cx="23.5" cy="12" r="2" fill="#e0b070"/><circle cx="28.5" cy="10.5" r="2" fill="#f0c060"/><circle cx="32" cy="13.5" r="1.8" fill="#b8d8a0"/>
   <circle cx="23" cy="18" r="2" fill="#f0a060"/><circle cx="31.5" cy="19" r="2.2" fill="#f08a50"/><circle cx="30.5" cy="17.5" r="1" fill="#fff"/>
   <circle cx="24" cy="21.5" r="1.8" fill="#d8c090"/><circle cx="19.5" cy="15" r="1.3" fill="#e8c880"/>
   <rect x="26.8" y="16" width="1" height="8" fill="#cfe6ef"/>
   <path d="M23.8 26.5 h7 l-0.6 5 q-2.9 1 -5.8 0z" fill="#0e0e12"/>
   <circle cx="10" cy="11" r="1" fill="#9ccbe6" opacity="0.8"/><circle cx="7" cy="25" r="1" fill="#9ccbe6" opacity="0.8"/>
   <circle cx="39" cy="16" r="1" fill="#9ccbe6" opacity="0.8"/><circle cx="37" cy="24" r="1" fill="#9ccbe6" opacity="0.8"/>
  </g>
  <g font-family="Liberation Sans" font-size="5.2" fill="#4a4a4a" style="letter-spacing:-0.45px">
   <text x="15.6" y="53.8">LEARNING</text>
   <text x="14.6" y="59.6">OBJECTIVES</text>
  </g>
  <g font-family="Liberation Sans" font-size="3.1" fill="#333" style="letter-spacing:-0.05px">
   <text x="53.4" y="44.2">By the end of this lesson you will:</text>
   <text x="53.4" y="49.8">Understand the importance of cohesive concepts and themes in</text>
   <text x="53.4" y="53.5">event events.</text>
   <text x="53.4" y="58.6">Analyze examples of successful event concepts and themes.</text>
   <text x="53.4" y="64">Develop ideas that align with the brief.</text>
   <text x="53.4" y="69.5">Incorporate feedback to refine your themes.</text>
  </g>
  <g fill="#f2b48a"><rect x="50.5" y="43" width="1" height="1"/><rect x="50.5" y="48.6" width="1" height="1"/><rect x="50.5" y="57.4" width="1" height="1"/><rect x="50.5" y="62.8" width="1" height="1"/><rect x="50.5" y="68.3" width="1" height="1"/></g>
 </svg>
</div>

<!-- thumb 5 -->
<div class="thumb" style="top:519.3px">
 <svg style="left:0;top:0" width="145" height="82">
  <rect x="4.3" y="4.7" width="44" height="1" fill="#2f3e52"/>
  <rect x="50" y="4.7" width="43.5" height="1" fill="#ee8c36"/>
  <rect x="95.4" y="4.7" width="43.6" height="1" fill="#6c7e8e"/>
  <text x="7.3" y="20.3" font-family="Liberation Sans" font-size="4.7" fill="#555" style="letter-spacing:-0.32px">WHAT ARE CONCEPTS AND THEMES?</text>
  <g style="filter:blur(0.25px)">
  <circle cx="22.5" cy="52" r="14.4" fill="#c8e8ee" stroke="#1aa58a" stroke-width="1.7"/>
  <path d="M13.5 66.5 q1 -9 6 -10.5 h6.5 q5 1.5 6 10.5 q-4.5 2 -9.3 2 q-5 0 -9.2 -2z" fill="#2b2b33"/>
  <rect x="20.6" y="56" width="4.9" height="11" fill="#f3c21a"/>
  <ellipse cx="23.5" cy="47.5" rx="6.8" ry="7.2" fill="#f4c9a0"/>
  <path d="M16.5 45.5 q0 -9 7.5 -9.5 q7 0 7.8 7 l-2 -2.5 q-6 -1 -13.3 5z" fill="#8a5a2a"/>
  <circle cx="21" cy="47" r="0.7" fill="#333"/><circle cx="26.5" cy="47" r="0.7" fill="#333"/>
  <text x="27" y="37.5" font-family="Liberation Sans" font-weight="bold" font-size="8" fill="#f8dc6a">?</text>
  <text x="33" y="39.5" font-family="Liberation Sans" font-weight="bold" font-size="10.5" fill="#f2b638">?</text>
  <text x="37" y="49.5" font-family="Liberation Sans" font-weight="bold" font-size="11" fill="#ee8a2e">?</text>
  </g>
  <g font-family="Liberation Sans" font-size="3.2" fill="#333" style="letter-spacing:-0.05px">
   <text x="63.5" y="31.2"><tspan font-weight="bold">Concept:</tspan> The overarching idea or framework</text>
   <text x="63.5" y="35">for your event.</text>
   <text x="63.5" y="40.2"><tspan font-weight="bold">Theme:</tspan> The specific message, story, or mood</text>
   <text x="63.5" y="44">your event conveys.</text>
   <text x="60.5" y="55.9" font-weight="bold">Why are they important?</text>
   <text x="63.5" y="61.9">Unify mood, purpose, and audience appeal.</text>
   <text x="63.5" y="67.2">Ensure the event has a clear direction and impact.</text>
  </g>
  <g fill="#e8873a"><rect x="61" y="30.2" width="0.9" height="0.9"/><rect x="61" y="39.2" width="0.9" height="0.9"/><rect x="58" y="54.9" width="0.9" height="0.9"/><rect x="61" y="60.9" width="0.9" height="0.9"/><rect x="61" y="66.2" width="0.9" height="0.9"/></g>
 </svg>
</div>

<!-- thumb 6 (selected) -->
<div class="a" style="left:57px;top:615.5px;width:150.4px;height:85px;border:3px solid #c23b1b;background:#fff"></div>
<div class="a th6" style="left:60px;top:618.4px;width:542px;height:305px;transform:scale(0.2663);transform-origin:0 0;overflow:hidden">
<div class="a" style="left:295.7px;top:19.5px;width:222.3px;height:4.4px;background:#445056"></div>
<div class="a" style="left:295.7px;top:25.6px;width:222.3px;height:257.5px;background:#445056"></div>
<div class="a" style="left:30.8px;top:256.8px;width:243.5px;height:1px;background:#e8e8e8"></div>
<div class="a" style="left:273.6px;top:54px;width:1px;height:203.5px;background:#e8e8e8"></div>
<svg style="left:0;top:0" width="1" height="1">
 <circle cx="153.3" cy="125.4" r="57.6" fill="none" stroke="#d9548a" stroke-width="2.2"/>
 <circle cx="118" cy="181.5" r="57.6" fill="none" stroke="#32ad72" stroke-width="2.2"/>
 <circle cx="187.9" cy="181.5" r="57.6" fill="none" stroke="#2f94c2" stroke-width="2.2"/>
</svg>
<div class="t vl" style="left:129px;top:96.1px;font-size:10.5px;color:#1a1a1a;transform:scaleX(0.892);transform-origin:0 0">AUDIENCE</div>
<div class="t vl" style="left:91px;top:187.2px;font-size:10.5px;color:#1a1a1a;transform:scaleX(0.844);transform-origin:0 0">THEME</div>
<div class="t vl" style="left:182.6px;top:187.2px;font-size:10.5px;color:#1a1a1a;transform:scaleX(0.789);transform-origin:0 0">PURPOSE</div>
<div class="t" style="left:309.1px;top:38.3px;font-size:15px;line-height:18.4px;color:#fff;font-weight:bold;letter-spacing:0.37px;white-space:normal;width:200px;-webkit-text-stroke:0.35px #fff">WHY COHESION<br><span style="letter-spacing:-0.35px">MATTERS</span></div>
<svg style="left:0;top:0" width="1" height="1"><g fill="#e8873a">
 <circle cx="331.5" cy="118.6" r="1.3"/><circle cx="331.5" cy="157.5" r="1.3"/><circle cx="331.5" cy="212.7" r="1.3"/>
</g></svg>
<div class="t" style="left:341.8px;top:111px;font-size:13px;line-height:16.2px;color:#fff;letter-spacing:-0.3px;-webkit-text-stroke:0.25px #fff">Create a memorable<br>audience experience.</div>
<div class="t" style="left:341.8px;top:149.9px;font-size:13px;line-height:16.4px;color:#fff;letter-spacing:-0.3px;-webkit-text-stroke:0.25px #fff">Strengthen the connection<br>between performances and<br>the event’s purpose.</div>
<div class="t" style="left:341.8px;top:205.1px;font-size:13px;line-height:16.6px;color:#fff;letter-spacing:-0.3px;-webkit-text-stroke:0.25px #fff">Build clarity and focus <span style="text-decoration:underline;text-decoration-color:#8aa4d8">in</span><br>event planning.</div>

</div>

<!-- ===== NOTES ===== -->
<style>.nt b{letter-spacing:-0.35px;color:#1a1a1a}.bu{display:inline-block;width:64px;padding-left:38.8px}</style>
<div class="t nt" style="left:246.7px;top:494.5px;font-size:12px;line-height:15.61px;color:#2b2b2b;letter-spacing:-0.01px">
<b>Why Cohesion Matters</b><br><b>Purpose:</b><br>Explain the value of cohesion in event planning.<br><b>Teacher Notes:</b><br>•Use the diagram (Audience, Purpose, Theme) to explain how cohesion strengthens:<br><span class="bu">•</span><b>Audience connection:</b><span style="letter-spacing:-0.07px"> Creates memorable and engaging experiences.</span><br><span class="bu">•</span><b>Purpose:</b><span style="letter-spacing:-0.15px"> Reinforces the event’s goals.</span><br><span class="bu">•</span><b>Theme:</b> Ensures all elements align for clarity and impact.<br>•Example discussion prompt:<br><span class="bu">•</span><span style="letter-spacing:0.04px">“How can cohesion between performances and the overall event purpose improve the audience experience?”</span>
</div>

</body></html>
